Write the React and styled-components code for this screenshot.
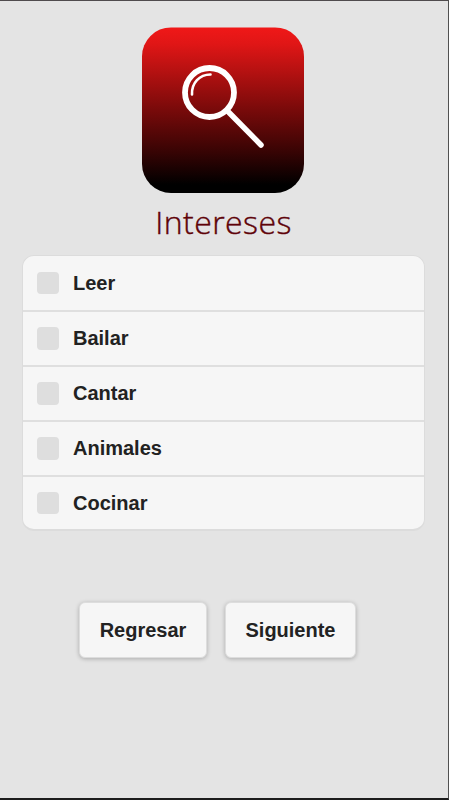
import React from 'react'
import styled, { createGlobalStyle } from 'styled-components'

const interests = ['Leer', 'Bailar', 'Cantar', 'Animales', 'Cocinar']

const App = () => {
    return (
        <>
            <GlobalStyle />
            <Page>
                <Logo viewBox="0 0 162 166" aria-hidden="true">
                    <defs>
                        <linearGradient id="fade" x1="0" y1="0" x2="0" y2="1">
                            <stop offset="0" stopColor="#f01818" />
                            <stop offset="0.1" stopColor="#e01616" />
                            <stop offset="0.5" stopColor="#780a0a" />
                            <stop offset="0.75" stopColor="#380404" />
                            <stop offset="0.95" stopColor="#000000" />
                        </linearGradient>
                    </defs>
                    <rect y="0.4" width="162" height="165.6" rx="29" fill="url(#fade)" />
                    <g fill="none" stroke="#fff" strokeLinecap="round">
                        <circle cx="67.5" cy="65.5" r="24.5" strokeWidth="5.8" />
                        <path d="M86 84.5 L119 118" strokeWidth="5.5" />
                        <path d="M50 67.5 C49.5 56 57.5 47.5 68.5 47.5" strokeWidth="2.6" />
                    </g>
                </Logo>
                <Title>Intereses</Title>
                <List>
                    {interests.map((name) => (
                        <Row key={name}>
                            <Check type="checkbox" />
                            {name}
                        </Row>
                    ))}
                </List>
                <Actions>
                    <Button $width="128px">Regresar</Button>
                    <Button $width="131px">Siguiente</Button>
                </Actions>
            </Page>
        </>
    )
}

const GlobalStyle = createGlobalStyle`
  * {
    box-sizing: border-box;
  }
  body {
    margin: 0;
    overflow: hidden;
    font-family: "Liberation Sans", Arial, sans-serif;
  }
`;
const Page = styled.div`
  display: flex;
  flex-direction: column;
  align-items: center;
  width: 449px;
  height: 800px;
  padding: 26px 23px 0 22px;
  background: #e4e4e4;
  border-top: 1px solid #4f4b4d;
  border-right: 1px solid #505050;
  border-bottom: 2px solid #1c1c1c;
`;
const Logo = styled.svg`
  display: block;
  width: 162px;
  height: 166px;
  margin-right: 2px;
`;
const Title = styled.h1`
  margin: 8px 0 0;
  height: 54px;
  line-height: 41px;
  font-family: "Open Sans", "Noto Sans", sans-serif;
  font-size: 32px;
  font-weight: 300;
  letter-spacing: 0.45px;
  color: #5e0208;
  -webkit-text-stroke: 0.4px #5e0208;
`;
const List = styled.div`
  width: 403px;
  border: 1px solid #dcdcdc;
  border-bottom-width: 2px;
  border-radius: 12px;
  background: #f6f6f6;
  overflow: hidden;
`;
const Row = styled.label`
  display: flex;
  align-items: center;
  height: 55px;
  padding-left: 13.5px;
  font-size: 20px;
  font-weight: bold;
  color: #222;
  border-bottom: 2px solid #dfdfdf;
  &:first-child {
    height: 56px;
  }
  &:last-child {
    height: 52px;
    border-bottom: none;
  }
`;
const Check = styled.input`
  appearance: none;
  width: 22.5px;
  height: 22.5px;
  margin: 0 14px 0 0;
  border-radius: 4px;
  background: #dedede;
`;
const Actions = styled.div`
  display: flex;
  gap: 18px;
  margin: 71px 12px 0 0;
`;
const Button = styled.button`
  width: ${(props) => props.$width};
  height: 56px;
  padding: 0;
  border: 1px solid #dddddd;
  border-radius: 6px;
  background: #f6f6f6;
  box-shadow: 0 1px 4px rgba(0, 0, 0, 0.25);
  font-family: inherit;
  font-size: 20px;
  font-weight: bold;
  color: #222;
`;
export default App;
